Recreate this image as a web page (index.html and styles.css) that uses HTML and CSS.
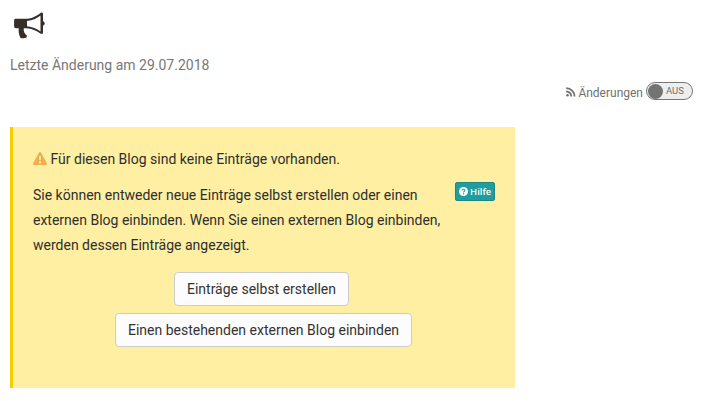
FILE: index.html
```html
<!DOCTYPE html>
<html lang="de">
<head>
<meta charset="utf-8">
<title>Blog</title>
<link rel="stylesheet" href="styles.css">
</head>
<body>
<header class="head">
  <svg class="horn" viewBox="0 0 32 27" aria-hidden="true">
    <path fill="#352e29" fill-rule="evenodd" d="M2 6.800H11C17 6.800 22.500 4.300 26.500 .9C27.700 0 29 .4 29 2V9.300C30.200 9.700 30.700 10.500 30.700 11.500S30.200 13.300 29 13.700V20.200C29 22.200 27.700 22.500 26.400 21.600C22.500 18.500 18 16.700 12.500 16.200H9.800C9.300 19 10.300 21.500 13 23.800L12.500 25.500C11 26.300 8 26.400 6.500 26C4.800 22.800 4.300 19 4.800 16.200H2C.7 16.200.1 15.400.1 14.200V8.600C.1 7.400.7 6.800 2 6.800ZM13 8.900V14.200C18.500 14.700 22.800 16.600 26.500 19.500V3.400C22.800 6.400 18.500 8.300 13 8.900Z"/>
  </svg>
  <p class="modified">Letzte Änderung am 29.07.2018</p>
</header>
<div class="subscribe">
  <svg class="rss" viewBox="0 0 10 10" fill="none" stroke="#707070" stroke-width="1.800" aria-hidden="true">
    <circle cx="1.500" cy="8.300" r="1.300" fill="#707070" stroke="none"/>
    <path d="M.2 4.500A5 5 0 0 1 5.300 9.600M.2 1.200A8.400 8.400 0 0 1 8.600 9.600"/>
  </svg>
  <span class="subscribe-label">Änderungen</span>
  <span class="toggle"><span class="knob"></span><span>AUS</span></span>
</div>
<section class="notice">
  <p class="warning">
    <svg class="triangle" viewBox="0 0 14 13" aria-hidden="true">
      <path fill="#f0ad4e" d="M6.100.6Q7-.5 7.900.6L13.800 11.200Q14.300 12.700 12.900 13H1.100Q-.3 12.700.2 11.200Z"/>
      <path fill="#ffefa3" d="M6 4H8L7.700 8.200H6.300ZM6 9.300H8V11.200H6Z"/>
    </svg>
    <span>Für diesen Blog sind keine Einträge vorhanden.</span>
  </p>
  <div class="explain">
    <p class="text">Sie können entweder neue Einträge selbst erstellen oder einen<br>externen Blog einbinden. Wenn Sie einen externen Blog einbinden,<br>werden dessen Einträge angezeigt.</p>
    <a class="help">
      <svg class="question" viewBox="0 0 9 9" aria-hidden="true">
        <circle cx="4.500" cy="4.500" r="4.500" fill="#fff"/>
        <path d="M3.100 3.500C3.200 1.800 6 1.900 5.900 3.500C5.900 4.400 4.600 4.400 4.600 5.400" fill="none" stroke="#209d9d" stroke-width="1.100"/>
        <circle cx="4.600" cy="6.800" r=".7" fill="#209d9d"/>
      </svg>
      <span>Hilfe</span>
    </a>
  </div>
  <div class="actions">
    <button class="button primary">Einträge selbst erstellen</button>
    <button class="button">Einen bestehenden externen Blog einbinden</button>
  </div>
</section>
</body>
</html>
```
FILE: styles.css
```css
* { box-sizing: border-box; }
body {
  margin: 0;
  padding: 12px 10px 0;
  background: #fff;
  color: #2e2e2e;
  font: 14px/25px Roboto, "Liberation Sans", sans-serif;
}
p { margin: 0; }
svg { display: block; flex: none; }
.horn { width: 32px; height: 27px; margin-left: 4px; }
.modified { margin-top: 14px; line-height: 24px; color: #777; }
.subscribe {
  display: flex;
  justify-content: flex-end;
  height: 20px;
  margin: 4px 2px 0 0;
  color: #707070;
  font-size: 12px;
  line-height: 25px;
}
.rss { width: 10px; height: 10px; margin: 6px 2px 0 0; }
.toggle {
  display: flex;
  align-items: center;
  gap: 3px;
  width: 47px;
  height: 18px;
  margin: 1px 0 0 3px;
  padding-left: 1px;
  border: 1px solid #777;
  border-radius: 9px;
  background: #eee;
  font-size: 9.5px;
  line-height: 16px;
}
.knob { width: 15px; height: 15px; border-radius: 50%; background: #737373; }
.notice {
  width: 505px;
  height: 261px;
  margin-top: 26px;
  padding: 20px 20px 0;
  border-left: 3px solid #f5ce00;
  background: #ffefa3;
}
.warning { display: flex; gap: 3.5px; }
.triangle { width: 14px; height: 13px; margin-top: 5px; }
.explain { display: flex; justify-content: space-between; margin-top: 11px; }
.text { white-space: nowrap; }
.help {
  display: flex;
  align-items: center;
  gap: 2px;
  width: 40px;
  height: 19px;
  margin-top: -1px;
  padding-left: 3px;
  border: 1px solid #1b8787;
  border-radius: 2px;
  background: #209d9d;
  color: #fff;
  font: 600 9.5px/17px "Open Sans", "Noto Sans", sans-serif;
}
.question { width: 9px; height: 9px; }
.actions {
  display: flex;
  flex-direction: column;
  align-items: center;
  gap: 7px;
  margin: 14px 1px 0 0;
}
.button {
  height: 34px;
  padding: 0 12px;
  border: 1px solid #ccc;
  border-radius: 4px;
  background: #fcfcfc;
  color: #333;
  font: inherit;
  line-height: 32px;
}
.primary { margin-right: 4px; }
```
